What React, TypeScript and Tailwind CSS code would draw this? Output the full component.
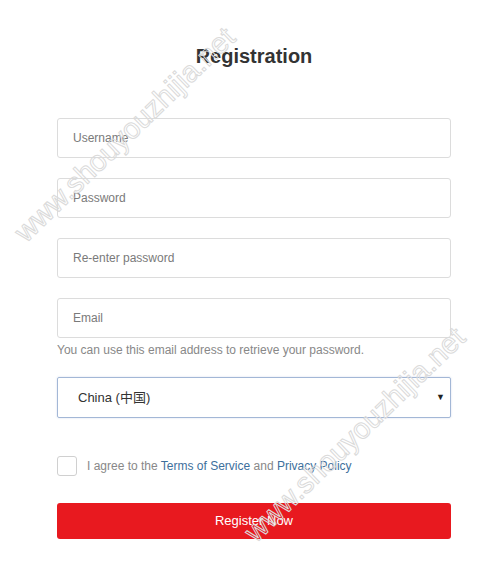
import React from 'react'

const fields = ['Username', 'Password', 'Re-enter password', 'Email']

function Watermark({ className }: { className: string }) {
  return (
    <div
      className={`pointer-events-none absolute whitespace-nowrap text-[29px] text-transparent [-webkit-text-stroke:1px_#dadada] -rotate-[44deg] -translate-x-1/2 -translate-y-1/2 ${className}`}
    >
      www.shouyouzhijia.net
    </div>
  )
}

export default function App() {
  return (
    <div className="relative w-[500px] h-[563px] overflow-hidden bg-white font-['Liberation_Sans',Arial,sans-serif] text-[#333]">
      <div className="pl-[57px]">
        <div className="w-[394px]">
          <h1 className="pt-[42px] text-center text-[20px] leading-[28px] font-bold text-[#333]">Registration</h1>

          <form className="mt-[48px] flex flex-col" onSubmit={(e) => e.preventDefault()}>
            <div className="flex flex-col gap-[20px]">
              {fields.map((f) => (
                <input
                  key={f}
                  type={f.toLowerCase().includes('password') ? 'password' : 'text'}
                  placeholder={f}
                  className="h-[40px] w-full rounded-[3px] border border-[#dcdcdc] px-[15px] text-[12px] outline-none placeholder:text-[#7a7a7a]"
                />
              ))}
            </div>
            <p className="mt-[4px] text-[12px] leading-[16px] text-[#888]">
              You can use this email address to retrieve your password.
            </p>

            <div className="mt-[19px] flex h-[41px] items-center justify-between rounded-[2px] border border-[#a3b7d6] pl-[20px] pr-[5px] text-[13px] text-[#333] shadow-[0_0_2px_rgba(120,150,200,0.35)]">
              <span className="font-['Liberation_Sans','Noto_Sans_CJK_SC',sans-serif]">China (中国)</span>
              <span className="text-[9px] text-[#222]">▼</span>
            </div>

            <label className="mt-[38px] flex items-center">
              <span className="h-[20px] w-[20px] rounded-[3px] border border-[#d0d0d0] bg-white" />
              <span className="ml-[10px] text-[12px] text-[#888]">
                I agree to the <a className="text-[#3d6f9c]">Terms of Service</a> and{' '}
                <a className="text-[#3d6f9c]">Privacy Policy</a>
              </span>
            </label>

            <button
              type="submit"
              className="mt-[27px] h-[36px] w-full rounded-[3px] bg-[#e8191f] text-[13px] text-white"
            >
              Register Now
            </button>
          </form>
        </div>
      </div>

      <Watermark className="left-[125px] top-[135px]" />
      <Watermark className="left-[355px] top-[435px]" />
    </div>
  )
}
